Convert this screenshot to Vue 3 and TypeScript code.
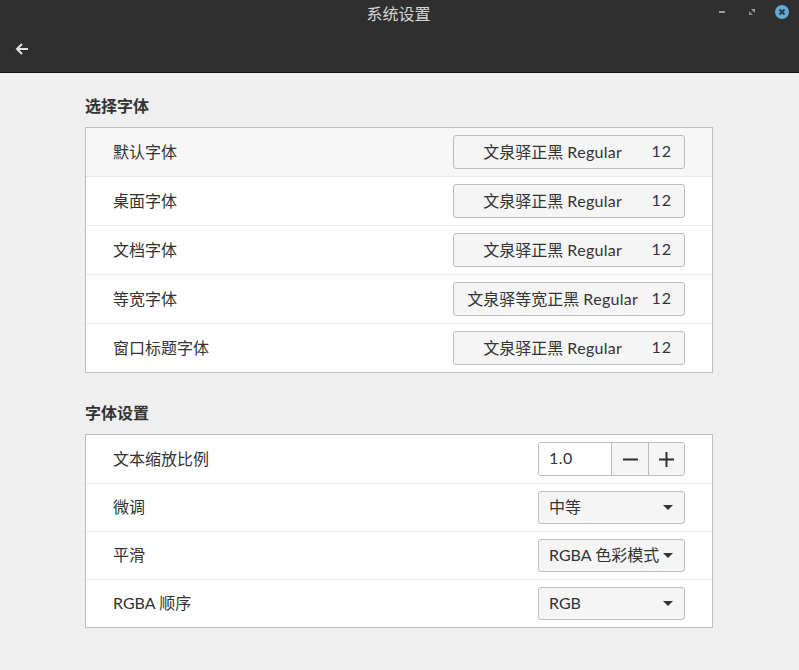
<script setup lang="ts">
interface FontRow {
  label: string;
  font: string;
}

const fontRows: FontRow[] = [
  { label: "默认字体", font: "文泉驿正黑" },
  { label: "桌面字体", font: "文泉驿正黑" },
  { label: "文档字体", font: "文泉驿正黑" },
  { label: "等宽字体", font: "文泉驿等宽正黑" },
  { label: "窗口标题字体", font: "文泉驿正黑" },
];

const selectRows = [
  { label: "微调", value: "中等" },
  { label: "平滑", value: "RGBA 色彩模式" },
  { label: "RGBA 顺序", value: "RGB" },
];
</script>

<template>
  <div class="window">
    <header class="titlebar">
      <div class="title-row">
        <span class="title">系统设置</span>
        <div class="win-controls">
          <svg class="win-icon" width="6" height="2" viewBox="0 0 6 2">
            <rect width="6" height="2" fill="#9a9a9a" />
          </svg>
          <svg class="win-icon restore" width="6" height="6" viewBox="0 0 6 6">
            <path d="M2 0 H6 V4 Z" fill="#a0a0a0" />
            <path d="M0 2 V6 H4 Z" fill="#8a8a8a" />
          </svg>
          <svg class="close-icon" width="14" height="14" viewBox="0 0 14 14">
            <circle cx="7" cy="7" r="7" fill="#62a9d6" />
            <path d="M4.5 4.5 L9.5 9.5 M9.5 4.5 L4.5 9.5" stroke="#2d3a42" stroke-width="2" />
          </svg>
        </div>
      </div>
      <div class="tool-row">
        <svg width="14" height="14" viewBox="0 0 14 14" class="back">
          <path d="M13 7 H3 M7 2 L2 7 L7 12" fill="none" stroke="#e4e0e0" stroke-width="2" />
        </svg>
      </div>
    </header>

    <main class="content">
      <h2 class="section-title">选择字体</h2>
      <section class="panel">
        <div v-for="(row, i) in fontRows" :key="row.label" class="row font-row" :class="{ active: i === 0 }">
          <span class="label">{{ row.label }}</span>
          <button class="font-btn">
            <span class="font-name">{{ row.font }} <span class="latin">Regular</span></span>
            <span class="font-size">12</span>
          </button>
        </div>
      </section>

      <h2 class="section-title second">字体设置</h2>
      <section class="panel">
        <div class="row font-row">
          <span class="label">文本缩放比例</span>
          <div class="spin">
            <span class="spin-value">1.0</span>
            <span class="spin-btn minus">
              <svg width="15" height="15" viewBox="0 0 15 15"><rect y="6.5" width="15" height="2" fill="#2e2e2e" /></svg>
            </span>
            <span class="spin-btn">
              <svg width="15" height="15" viewBox="0 0 15 15"><path d="M0 6.5 H6.5 V0 H8.5 V6.5 H15 V8.5 H8.5 V15 H6.5 V8.5 H0 Z" fill="#2e2e2e" /></svg>
            </span>
          </div>
        </div>
        <div v-for="row in selectRows" :key="row.label" class="row select-row">
          <span class="label">{{ row.label }}</span>
          <div class="combo">
            <span class="label">{{ row.value }}</span>
            <i class="caret"></i>
          </div>
        </div>
      </section>
    </main>
  </div>
</template>

<style scoped>
.window {
  width: 799px;
  height: 670px;
  overflow: hidden;
  background: #efefef;
  font-family: "Lato", "Noto Sans CJK SC", sans-serif;
  font-size: 16px;
  color: #333;
}

.titlebar {
  height: 72px;
  background: #2f2f2f;
  border-bottom: 1px solid #111;
}

.title-row {
  position: relative;
  height: 28px;
  display: flex;
  align-items: center;
  justify-content: center;
  padding: 0 2px 2px 0;
  box-sizing: border-box;
}

.title {
  color: #d6d6d6;
}

.win-controls {
  position: absolute;
  top: 5px;
  right: 10px;
  display: flex;
  align-items: center;
}

.win-icon,
.close-icon {
  display: block;
}

.restore {
  margin-left: 24px;
}

.close-icon {
  margin-left: 20px;
}

.tool-row {
  height: 44px;
  display: flex;
  align-items: center;
  padding-left: 15px;
  padding-bottom: 3px;
  box-sizing: border-box;
}

.content {
  padding: 22px 86px 0 85px;
}

.section-title {
  margin: 0 0 11px;
  height: 21px;
  line-height: 21px;
  font-size: 16px;
  font-weight: 700;
  color: #333;
}

.section-title.second {
  margin-top: 29px;
}

.panel {
  background: #fff;
  border: 1px solid #bdbdbd;
}

.row {
  display: flex;
  align-items: center;
  justify-content: space-between;
  padding: 0 27px;
  border-bottom: 1px solid #e9e9e9;
  box-sizing: border-box;
}

.row:last-child {
  border-bottom: none;
}

.font-row {
  height: 49px;
}

.font-row:last-child {
  height: 48px;
}

.select-row {
  height: 48px;
}

.select-row:last-child {
  height: 47px;
}

.active {
  background: #f7f7f7;
}

.label {
  padding-bottom: 3px;
}

.font-btn {
  width: 232px;
  height: 34px;
  display: flex;
  align-items: center;
  justify-content: center;
  gap: 12px;
  padding: 0 12px;
  background: #f5f5f5;
  border: 1px solid #bcbcbc;
  border-radius: 3px;
  font: inherit;
  color: #333;
  box-sizing: border-box;
}

.font-name {
  flex: 1;
  padding: 0 0 3px;
  text-align: center;
  white-space: nowrap;
}

.latin {
  letter-spacing: 0.3px;
}

.font-size {
  padding-bottom: 3px;
  letter-spacing: 1px;
}

.spin {
  width: 147px;
  height: 34px;
  display: flex;
  border: 1px solid #bcbcbc;
  border-radius: 3px;
  box-sizing: border-box;
  overflow: hidden;
}

.spin-value {
  flex: 1;
  padding-left: 10px;
  line-height: 30px;
  letter-spacing: 0.5px;
  background: #fff;
}

.spin-btn {
  width: 36px;
  display: flex;
  align-items: center;
  justify-content: center;
  background: #f5f5f5;
  border-left: 1px solid #bcbcbc;
  box-sizing: border-box;
}

.spin-btn.minus {
  width: 37px;
}

.combo {
  width: 147px;
  height: 33px;
  display: flex;
  align-items: center;
  justify-content: space-between;
  padding: 0 11px 0 10px;
  background: #f5f5f5;
  border: 1px solid #bcbcbc;
  border-radius: 3px;
  box-sizing: border-box;
  white-space: nowrap;
}

.caret {
  width: 0;
  height: 0;
  border-left: 5px solid transparent;
  border-right: 5px solid transparent;
  border-top: 5px solid #333;
  flex: none;
}
</style>
